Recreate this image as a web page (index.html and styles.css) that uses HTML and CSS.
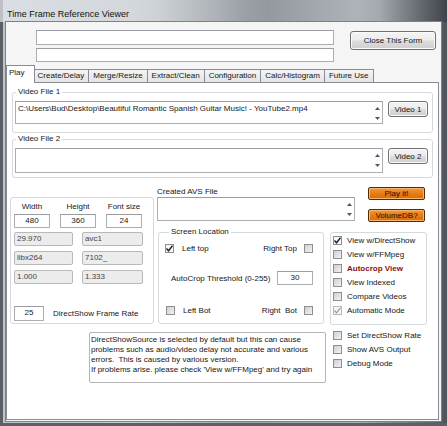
FILE: index.html
```html
<!DOCTYPE html>
<html lang="en">
<head>
<meta charset="utf-8">
<title>Time Frame Reference Viewer</title>
<link rel="stylesheet" href="styles.css">
</head>
<body>
<div class="window">
  <div class="titlebar">Time Frame Reference Viewer</div>
  <div class="client">

    <div class="toprow">
      <div class="topboxes">
        <div class="tbox top1"></div>
        <div class="tbox top2"></div>
      </div>
      <div class="btn closebtn">Close This Form</div>
    </div>

    <div class="tabs">
      <div class="tab active">Play</div>
      <div class="tab">Create/Delay</div>
      <div class="tab">Merge/Resize</div>
      <div class="tab">Extract/Clean</div>
      <div class="tab">Configuration</div>
      <div class="tab">Calc/Histogram</div>
      <div class="tab">Future Use</div>
    </div>

    <div class="tabpage">
      <fieldset class="group vgroup">
        <legend>Video File 1</legend>
        <div class="vrow">
          <div class="memo vmemo">
            <span class="memotext">C:\Users\Bud\Desktop\Beautiful Romantic Spanish Guitar Music! - YouTube2.mp4</span>
            <svg class="spin" width="9" height="20" viewBox="0 0 9 20"><path d="M2 7 L4.5 4 L7 7 Z" fill="#555"/><path d="M2 14 L4.5 17 L7 14 Z" fill="#555"/></svg>
          </div>
          <div class="btn vbtn">Video 1</div>
        </div>
      </fieldset>

      <fieldset class="group vgroup v2">
        <legend>Video File 2</legend>
        <div class="vrow">
          <div class="memo vmemo tall">
            <span class="memotext"></span>
            <svg class="spin" width="9" height="20" viewBox="0 0 9 20"><path d="M2 7 L4.5 4 L7 7 Z" fill="#555"/><path d="M2 14 L4.5 17 L7 14 Z" fill="#555"/></svg>
          </div>
          <div class="btn vbtn">Video 2</div>
        </div>
      </fieldset>

      <div class="lower">
        <div class="box leftgroup">
          <div class="sizegrid">
            <div class="cap">Width</div>
            <div class="cap">Height</div>
            <div class="cap">Font size</div>
            <div class="tbox num">480</div>
            <div class="tbox num">360</div>
            <div class="tbox num">24</div>
          </div>
          <div class="inforows">
            <div class="ro wide">29.970</div>
            <div class="ro">avc1</div>
            <div class="ro wide">libx264</div>
            <div class="ro">7102_</div>
            <div class="ro wide">1.000</div>
            <div class="ro">1.333</div>
          </div>
          <div class="raterow">
            <div class="tbox num rate">25</div>
            <span>DirectShow Frame Rate</span>
          </div>
        </div>

        <div class="midright">
          <div class="avsrow">
            <div class="avs">
              <div class="avslabel">Created AVS File</div>
              <div class="memo avsmemo">
                <span class="memotext"></span>
                <svg class="spin" width="9" height="20" viewBox="0 0 9 20"><path d="M2 7 L4.5 4 L7 7 Z" fill="#555"/><path d="M2 14 L4.5 17 L7 14 Z" fill="#555"/></svg>
              </div>
            </div>
            <div class="orangebtns">
              <div class="obtn">Play it!</div>
              <div class="obtn">VolumeDB?</div>
            </div>
          </div>

          <div class="optrow">
            <fieldset class="group screen">
              <legend>Screen Location</legend>
              <div class="corner toprowc">
                <label class="chk"><span class="cb on"><svg width="9" height="9" viewBox="0 0 9 9"><path d="M1.5 4.5 L3.5 6.8 L7.5 1.8" fill="none" stroke="#223" stroke-width="1.4"/></svg></span>Left top</label>
                <label class="chk rchk">Right Top<span class="cb"></span></label>
              </div>
              <div class="thresh">
                <span>AutoCrop Threshold (0-255)</span>
                <div class="tbox num threshbox">30</div>
              </div>
              <div class="corner botrowc">
                <label class="chk"><span class="cb"></span>Left Bot</label>
                <label class="chk rchk">Right&nbsp; Bot<span class="cb"></span></label>
              </div>
            </fieldset>

            <div class="box viewgroup">
              <label class="chk vitem"><span class="cb on"><svg width="9" height="9" viewBox="0 0 9 9"><path d="M1.5 4.5 L3.5 6.8 L7.5 1.8" fill="none" stroke="#223" stroke-width="1.4"/></svg></span>View w/DirectShow</label>
              <label class="chk vitem"><span class="cb"></span>View w/FFMpeg</label>
              <label class="chk vitem autocrop"><span class="cb"></span>Autocrop View</label>
              <label class="chk vitem"><span class="cb"></span>View Indexed</label>
              <label class="chk vitem"><span class="cb"></span>Compare Videos</label>
              <label class="chk vitem"><span class="cb on dis"><svg width="9" height="9" viewBox="0 0 9 9"><path d="M1.5 4.5 L3.5 6.8 L7.5 1.8" fill="none" stroke="#999" stroke-width="1.2"/></svg></span>Automatic Mode</label>
            </div>
          </div>
        </div>
      </div>

      <div class="bottom">
        <div class="note">DirectShowSource is selected by default but this can cause<br>problems such as audio/video delay not accurate and various<br>errors.&nbsp; This is caused by various version.<br>If problems arise. please check 'View w/FFMpeg' and try again</div>
        <div class="extras">
          <label class="chk vitem"><span class="cb"></span>Set DirectShow Rate</label>
          <label class="chk vitem"><span class="cb"></span>Show AVS Output</label>
          <label class="chk vitem"><span class="cb"></span>Debug Mode</label>
        </div>
      </div>
    </div>

  </div>
</div>
</body>
</html>
```

FILE: styles.css
```css
body {
  margin: 0;
  font-family: 'Liberation Sans', Arial, sans-serif;
  font-size: 8px;
  color: #161616;
  background: #4a4e54;
}

.window {
  width: 447px;
  height: 426px;
  display: flex;
  flex-direction: column;
  background: linear-gradient(90deg, #bfc4ca 0%, #c7ccd1 30%, #9ea3a9 55%, #aab0b6 80%, #4f545a 100%);
  box-shadow: inset 3px 0 0 #5b6066, inset 0 -3px 0 #5b6066;
}

.titlebar {
  height: 22px;
  padding-left: 7px;
  font-size: 9px;
  line-height: 28px;
  color: #111;
  background: linear-gradient(90deg, rgba(230,234,238,0.7) 0%, rgba(220,224,228,0.5) 35%, rgba(120,124,130,0.3) 60%, rgba(200,204,208,0.3) 85%, rgba(40,44,50,0.4) 100%);
}

.client {
  margin: 0 6px 5px 6px;
  flex: 1;
  background: #f5f5f5;
  box-shadow: 0 0 0 1px #7c8187;
}

/* top strip */
.toprow {
  display: flex;
  padding: 8px 0 0 30px;
}

.topboxes {
  width: 298px;
  display: flex;
  flex-direction: column;
  gap: 3px;
}

.tbox {
  box-sizing: border-box;
  background: #fff;
  border: 1px solid #abadb3;
  border-top-color: #9a9ca3;
}

.top1 { height: 15px; }
.top2 { height: 14px; }

.btn {
  box-sizing: border-box;
  border: 1px solid #707070;
  border-radius: 3px;
  background: linear-gradient(#f4f4f4 0%, #ececec 48%, #dcdcdc 52%, #d0d0d0 100%);
  box-shadow: inset 0 0 0 1px #fbfbfb;
  display: flex;
  align-items: center;
  justify-content: center;
}

.closebtn {
  margin: 1px 0 0 16px;
  width: 86px;
  height: 19px;
}

/* tabs */
.tabs {
  display: flex;
  align-items: flex-end;
  margin-top: 3px;
  height: 17px;
}

.tab {
  box-sizing: border-box;
  height: 13px;
  padding: 0 4px;
  margin-right: -1px;
  border: 1px solid #898c95;
  border-bottom: none;
  background: linear-gradient(#f4f4f4, #e4e4e4);
  line-height: 12px;
}

.tab.active {
  position: relative;
  z-index: 1;
  height: 18px;
  margin-bottom: -1px;
  padding: 0 9px 0 2px;
  margin-right: -2px;
  background: #fff;
  line-height: 14px;
}

.tabpage {
  box-sizing: border-box;
  width: 433px;
  height: 338px;
  background: #fff;
  border: 1px solid #898c95;
}

/* groups */
.group {
  margin: 0;
  padding: 0;
  min-width: 0;
  border: 1px solid #d3d9dd;
  border-radius: 3px;
}

.group legend {
  padding: 0 2px;
  line-height: 10px;
  margin-left: 1px;
}

.box {
  box-sizing: border-box;
  border: 1px solid #d3d9dd;
  border-radius: 3px;
}

.vgroup {
  margin: 4px 0 0 5px;
  width: 421px;
  box-sizing: border-box;
  padding: 4px 0 8px 2px;
}

.vgroup.v2 {
  margin-top: 1px;
  padding-bottom: 4px;
}

.vrow {
  display: flex;
  align-items: flex-start;
}

.memo {
  box-sizing: border-box;
  background: #fff;
  border: 1px solid #abadb3;
  border-top-color: #9a9ca3;
  display: flex;
  justify-content: space-between;
}

.memotext {
  padding: 2px 0 0 2px;
  white-space: nowrap;
}

.spin {
  flex: none;
  margin-top: 1px;
}

.vmemo {
  width: 368px;
  height: 23px;
}

.vmemo.tall {
  height: 25px;
}

.vbtn {
  margin-left: 5px;
  width: 40px;
  height: 16px;
}

/* lower part */
.lower {
  display: flex;
  margin-top: 9px;
}

.leftgroup {
  margin: 10px 0 0 3px;
  width: 144px;
  height: 127px;
  padding: 4px 0 0 3px;
}

.sizegrid {
  display: grid;
  grid-template-columns: 36px 36px 36px;
  column-gap: 10px;
  row-gap: 2px;
}

.cap {
  text-align: center;
  line-height: 10px;
}

.num {
  height: 14px;
  text-align: center;
  line-height: 12px;
}

.inforows {
  display: grid;
  grid-template-columns: 59px 61px;
  column-gap: 9px;
  row-gap: 5px;
  margin-top: 4px;
}

.ro {
  box-sizing: border-box;
  height: 14px;
  background: #ececec;
  border: 1px solid #b8b8b8;
  border-radius: 2px;
  color: #444;
  padding-left: 2px;
  line-height: 12px;
}

.raterow {
  display: flex;
  align-items: center;
  margin-top: 22px;
  gap: 9px;
}

.rate {
  width: 30px;
  height: 15px;
}

.midright {
  margin-left: 3px;
}

.avsrow {
  display: flex;
}

.avslabel {
  line-height: 10px;
}

.avsmemo {
  width: 198px;
  height: 24px;
}

.orangebtns {
  margin-left: 13px;
  display: flex;
  flex-direction: column;
  gap: 9px;
}

.obtn {
  box-sizing: border-box;
  width: 57px;
  height: 13px;
  border: 1px solid #4e2e0c;
  border-radius: 2px;
  background: linear-gradient(#f29a3c, #e67a10 55%, #d96c06);
  box-shadow: inset 0 0 0 1px #f7b574;
  text-align: center;
  line-height: 11px;
  color: #1b1006;
}

.optrow {
  display: flex;
  align-items: flex-start;
  margin-top: 5px;
}

.screen {
  margin-left: 1px;
  width: 166px;
  height: 97px;
  box-sizing: border-box;
  padding: 0 10px 0 6px;
}

.screen legend {
  margin-left: 4px;
}

.chk {
  display: flex;
  align-items: center;
  height: 10px;
}

.cb {
  box-sizing: border-box;
  width: 9px;
  height: 9px;
  flex: none;
  border: 1px solid #8e8f8f;
  background: linear-gradient(135deg, #cfd0d2, #f2f2f2);
  display: flex;
}

.cb.on {
  background: #f7f7f7;
}

.cb.dis {
  border-color: #b8b8b8;
}

.cb svg {
  margin: -1px;
}

.corner {
  display: flex;
  justify-content: space-between;
}

.chk .cb { margin-right: 8px; }
.chk.rchk .cb { margin: 0 0 0 7px; }

.toprowc {
  margin-top: 6px;
}

.thresh {
  display: flex;
  align-items: center;
  justify-content: space-between;
  margin: 18px 0 0 6px;
}

.threshbox {
  width: 36px;
}

.botrowc {
  margin: 20px 0 0 1px;
}

.viewgroup {
  margin: 5px 0 0 6px;
  width: 97px;
  height: 93px;
  padding-left: 2px;
}

.vitem {
  height: 14px;
}

.vitem .cb {
  margin-right: 5px;
}

.autocrop {
  color: #8b0f0f;
  font-weight: bold;
}

/* bottom part */
.bottom {
  display: flex;
  align-items: flex-start;
  margin-top: 7px;
}

.note {
  box-sizing: border-box;
  margin-left: 82px;
  width: 237px;
  height: 51px;
  border: 1px solid #b5b5b5;
  border-radius: 2px;
  padding: 2px 0 0 1px;
  line-height: 10px;
  white-space: nowrap;
}

.extras {
  margin: -4px 0 0 7px;
}
```
